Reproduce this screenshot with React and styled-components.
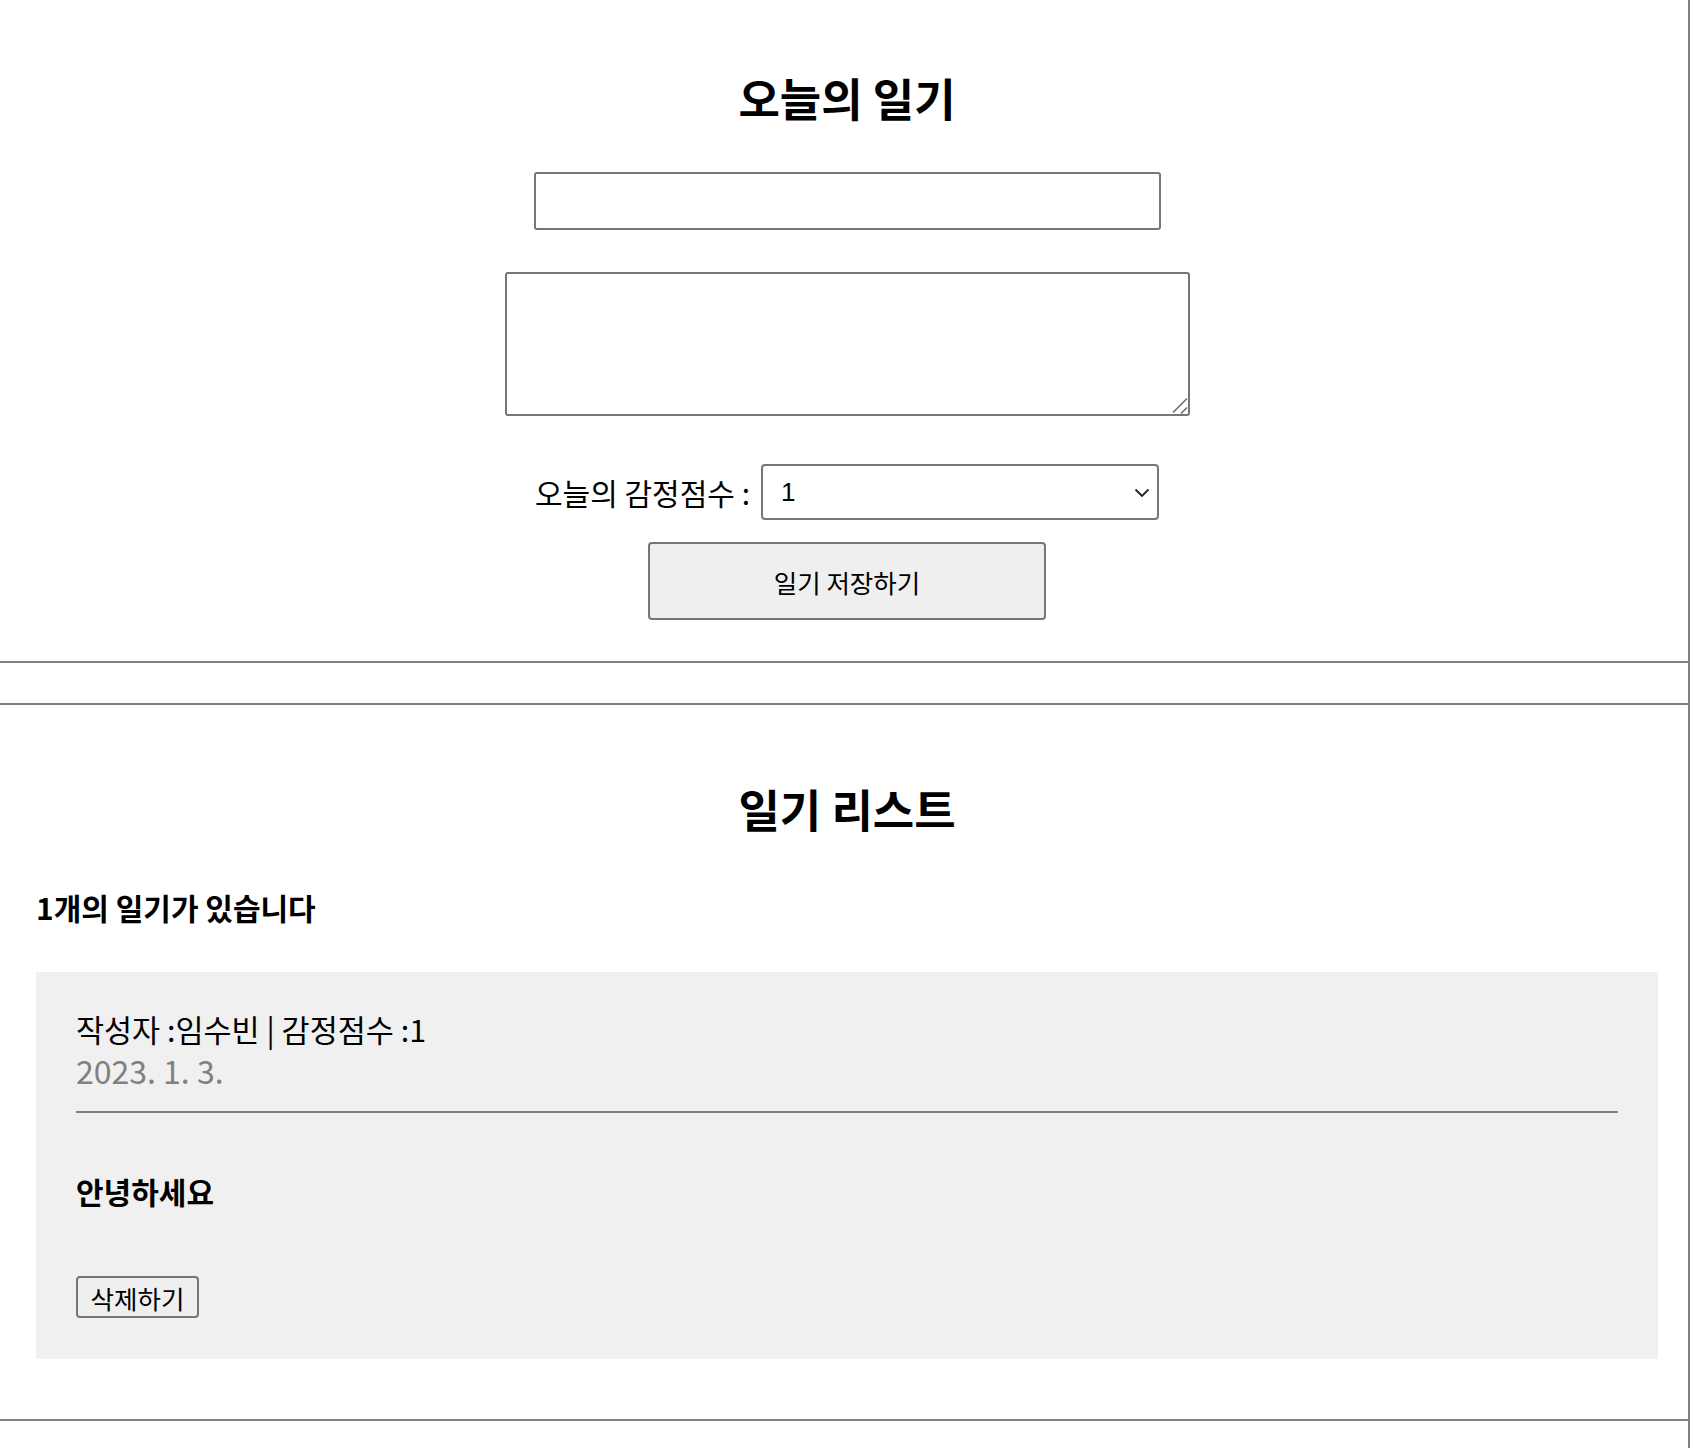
import React, { useState } from 'react';
import styled, { createGlobalStyle } from 'styled-components';

const GlobalStyle = createGlobalStyle`
  body {
    margin: 0;
    background: #fff;
    color: #000;
    font-family: 'Noto Sans CJK KR', 'Noto Sans', sans-serif;
  }
  * { box-sizing: border-box; }
`;

const Page = styled.div`
  min-height: 100vh;
  border-right: 2px solid gray;
`;

const Section = styled.section`
  border-bottom: 2px solid gray;
  border-top: ${(p) => (p.$topBorder ? '2px solid gray' : 'none')};
  margin-top: ${(p) => p.$gap || 0}px;
  padding: ${(p) => p.$padTop}px 30px ${(p) => p.$padBottom}px 36px;
`;

const EditorColumn = styled.div`
  display: flex;
  flex-direction: column;
  align-items: center;
`;

const Title = styled.h2`
  margin: 0;
  font-size: 45px;
  line-height: 56px;
  font-weight: 700;
  text-align: center;
`;

const AuthorInput = styled.input`
  margin-top: 46px;
  width: 627px;
  height: 58px;
  border: 2px solid #767676;
  border-radius: 3px;
  padding: 0 20px;
  font-family: inherit;
  font-size: 26px;
`;

const AreaWrap = styled.div`
  position: relative;
  margin-top: 42px;
  width: 685px;
  height: 144px;
`;

const ContentArea = styled.textarea`
  display: block;
  width: 100%;
  height: 100%;
  border: 2px solid #767676;
  border-radius: 3px;
  padding: 20px;
  resize: none;
  font-family: inherit;
  font-size: 26px;
`;

const Grip = styled.svg`
  position: absolute;
  right: 1px;
  bottom: 1px;
  pointer-events: none;
`;

const ScoreRow = styled.div`
  margin-top: 48px;
  display: flex;
  align-items: center;
  gap: 11px;
  font-size: 30px;
  line-height: 40px;
`;

const SelectWrap = styled.div`
  position: relative;
  width: 398px;
  height: 56px;
`;

const ScoreSelect = styled.select`
  appearance: none;
  width: 100%;
  height: 100%;
  border: 2px solid #767676;
  border-radius: 4px;
  padding: 0 18px;
  background: #fff;
  font-family: 'Liberation Sans', 'Noto Sans CJK KR', sans-serif;
  font-size: 26px;
  color: #000;
`;

const Chevron = styled.svg`
  position: absolute;
  right: 9px;
  top: 24px;
  pointer-events: none;
`;

const SaveButton = styled.button`
  margin-top: 22px;
  width: 398px;
  height: 78px;
  background: #efefef;
  border: 2px solid #767676;
  border-radius: 4px;
  font-family: inherit;
  font-size: 25.5px;
  color: #000;
  cursor: pointer;
`;

const CountText = styled.h4`
  margin: 52px 0 0;
  font-size: 30px;
  line-height: 36px;
  font-weight: 700;
`;

const Item = styled.div`
  margin-top: 47px;
  background: rgb(240, 240, 240);
  padding: 37px 40px 41px;
`;

const Info = styled.div`
  border-bottom: 2px solid gray;
  padding-bottom: 20px;
`;

const InfoLine = styled.div`
  font-size: 30.5px;
  line-height: 40px;
`;

const DateLine = styled.div`
  font-size: 32px;
  line-height: 42px;
  color: gray;
`;

const Content = styled.div`
  margin: 58px 0 65px;
  font-size: 30px;
  line-height: 40px;
  font-weight: 700;
`;

const DeleteButton = styled.button`
  display: block;
  width: 123px;
  height: 42px;
  padding: 0;
  background: #efefef;
  border: 2px solid #767676;
  border-radius: 4px;
  font-family: inherit;
  font-size: 25.5px;
  color: #000;
  cursor: pointer;
`;

const initialList = [
  { id: 0, author: '임수빈', emotion: 1, content: '안녕하세요', created_date: new Date(2023, 0, 3).getTime() },
];

const App = () => {
  const [state, setState] = useState({ author: '', content: '', emotion: 1 });
  const [list, setList] = useState(initialList);

  const handleChange = (e) => setState({ ...state, [e.target.name]: e.target.value });

  const onRemove = (id) => setList(list.filter((it) => it.id !== id));

  const formatDate = (t) => {
    const d = new Date(t);
    return `${d.getFullYear()}. ${d.getMonth() + 1}. ${d.getDate()}.`;
  };

  return (
    <Page>
      <GlobalStyle />
      <Section $padTop={70} $padBottom={41}>
        <EditorColumn>
          <Title>오늘의 일기</Title>
          <AuthorInput name='author' value={state.author} onChange={handleChange} />
          <AreaWrap>
            <ContentArea name='content' value={state.content} onChange={handleChange} />
            <Grip width='18' height='18' viewBox='0 0 18 18'>
              <path d='M2 15.5 L16 1.5 M10 16.5 L16 10.5' stroke='#6f6f6f' strokeWidth='1.6' fill='none' />
            </Grip>
          </AreaWrap>
          <ScoreRow>
            <span>오늘의 감정점수 :</span>
            <SelectWrap>
              <ScoreSelect name='emotion' value={state.emotion} onChange={handleChange}>
                {[1, 2, 3, 4, 5].map((n) => <option key={n} value={n}>{n}</option>)}
              </ScoreSelect>
              <Chevron width='16' height='10' viewBox='0 0 16 10'>
                <path d='M1.5 1.5 L8 8 L14.5 1.5' stroke='#222' strokeWidth='1.8' fill='none' />
              </Chevron>
            </SelectWrap>
          </ScoreRow>
          <SaveButton type='button'>일기 저장하기</SaveButton>
        </EditorColumn>
      </Section>
      <Section $topBorder $gap={40} $padTop={76} $padBottom={60}>
        <Title>일기 리스트</Title>
        <CountText>{list.length}개의 일기가 있습니다</CountText>
        {list.map((it) => (
          <Item key={it.id}>
            <Info>
              <InfoLine>작성자 :{it.author} | 감정점수 :{it.emotion}</InfoLine>
              <DateLine>{formatDate(it.created_date)}</DateLine>
            </Info>
            <Content>{it.content}</Content>
            <DeleteButton type='button' onClick={() => onRemove(it.id)}>삭제하기</DeleteButton>
          </Item>
        ))}
      </Section>
    </Page>
  );
};

export default App;
